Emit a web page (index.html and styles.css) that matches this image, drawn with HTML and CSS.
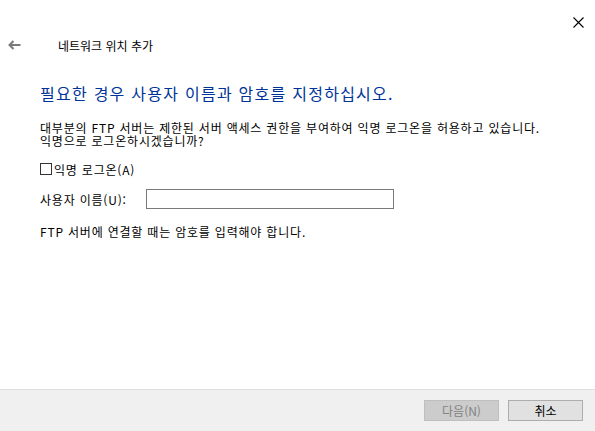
FILE: index.html
```html
<!DOCTYPE html>
<html lang="ko">
<head>
    <meta charset="UTF-8">
    <title>네트워크 위치 추가</title>
    <link rel="stylesheet" href="styles.css">
</head>
<body>
<div class="dialog">
    <div class="titlebar">
        <span class="close">
            <svg width="11" height="11" viewBox="0 0 11 11"><path d="M0.5 0.5 L10.5 10.5 M10.5 0.5 L0.5 10.5" stroke="#000" stroke-width="1.1" fill="none"/></svg>
        </span>
    </div>
    <div class="nav">
        <span class="back">
            <svg width="13" height="10" viewBox="0 0 13 10"><path d="M12.5 5 H1.5 M5.5 1 L1.5 5 L5.5 9" stroke="#7a7a7a" stroke-width="2" fill="none"/></svg>
        </span>
        <span class="nav-title">네트워크 위치 추가</span>
    </div>

    <div class="content">
        <h1>필요한 경우 사용자 이름과 암호를 지정하십시오.</h1>
        <p class="info">대부분의 FTP 서버는 제한된 서버 액세스 권한을 부여하여 익명 로그온을 허용하고 있습니다.<br>익명으로 로그온하시겠습니까?</p>
        <label class="check"><span class="box"></span>익명 로그온(A)</label>
        <div class="field">
            <label for="user">사용자 이름(U):</label>
            <input type="text" id="user">
        </div>
        <p class="note">FTP 서버에 연결할 때는 암호를 입력해야 합니다.</p>
    </div>

    <div class="footer">
        <button class="btn" disabled>다음(N)</button>
        <button class="btn">취소</button>
    </div>
</div>
</body>
</html>
```

FILE: styles.css
```css
/* reset */
body, html {
    margin: 0;
    padding: 0;
    background: #fff;
    font-family: "Noto Sans CJK KR", "Noto Sans", sans-serif;
    color: #000;
}

.dialog {
    width: 595px;
    height: 431px;
    display: flex;
    flex-direction: column;
}

.titlebar {
    height: 30px;
    display: flex;
    justify-content: flex-end;
}

.close {
    padding: 9px 11px 0 0;
}

.nav {
    height: 30px;
    display: flex;
    align-items: center;
}

.back {
    width: 13px;
    margin-left: 8px;
    display: flex;
}

.nav-title {
    margin-left: 37px;
    font-size: 12px;
}

.content {
    flex: 1;
    padding-left: 40px;
    font-size: 12px;
    letter-spacing: 0.8px;
}

h1 {
    margin: 21px 0 0 0;
    font-size: 16px;
    font-weight: normal;
    color: #003399;
    line-height: 24px;
    letter-spacing: 1.25px;
}

.info {
    margin: 16px 0 0 0;
    line-height: 13px;
}

.check {
    display: flex;
    align-items: center;
    margin-top: 15px;
    height: 14px;
}

.box {
    width: 10px;
    height: 10px;
    border: 1px solid #333;
    margin-right: 2px;
}

.field {
    display: flex;
    align-items: center;
    margin-top: 13px;
}

.field label {
    width: 106px;
}

.field input {
    width: 248px;
    height: 20px;
    padding: 0;
    border: 1px solid #7a7a7a;
    box-sizing: border-box;
}

.note {
    margin: 16px 0 0 0;
    line-height: 14px;
}

.footer {
    height: 42px;
    background: #f0f0f0;
    border-top: 1px solid #dfdfdf;
    box-sizing: border-box;
    display: flex;
    justify-content: flex-end;
    align-items: flex-start;
    gap: 9px;
    padding: 10px 12px 0 0;
}

.btn {
    width: 75px;
    height: 21px;
    padding: 0;
    font-family: inherit;
    font-size: 12px;
    background: #e1e1e1;
    border: 1px solid #adadad;
    color: #000;
}

.btn:disabled {
    background: #cccccc;
    border-color: #bfbfbf;
    color: #838383;
}
```
